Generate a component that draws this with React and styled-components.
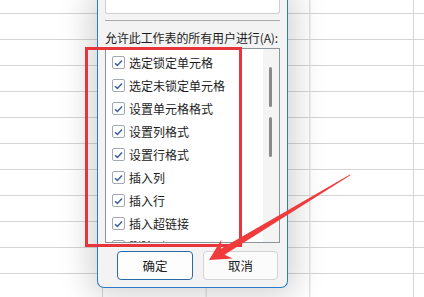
import React from 'react';
import styled, { createGlobalStyle, css } from 'styled-components';

const GlobalStyle = createGlobalStyle`
  html, body {
    margin: 0;
    padding: 0;
    background: #fff;
  }
  body {
    font-family: "Noto Sans CJK SC", "Noto Sans", sans-serif;
    color: #1b1b1b;
  }
`;

const Stage = styled.div`
  position: relative;
  width: 424px;
  height: 297px;
  overflow: hidden;
  box-sizing: border-box;
  padding-left: 97px;
  display: flex;
  align-items: flex-start;
  background-color: #fff;
  background-image:
    linear-gradient(#d5d5d5 1px, transparent 1px),
    linear-gradient(90deg, #d5d5d5 1px, transparent 1px);
  background-size: 100% 26px, 103.67px 100%;
  background-position: 0 13px, 102px 0;
`;

const Dialog = styled.div`
  box-sizing: border-box;
  width: 191px;
  height: 288px;
  padding: 0 7px;
  display: flex;
  flex-direction: column;
  background: #f3f3f3;
  border: 1px solid #2a7ccb;
  border-top: none;
  border-radius: 0 0 7px 7px;
  box-shadow: 0 0 30px 8px rgba(0, 0, 0, 0.17);
`;

const TopField = styled.div`
  height: 14px;
  box-sizing: border-box;
  background: #fff;
  border: 1px solid #cfcfcf;
  border-top: none;
  border-radius: 0 0 3px 3px;
`;

const Divider = styled.div`
  height: 1px;
  margin-top: 6px;
  background: #a9a9a9;
`;

const Label = styled.div`
  margin-top: 9px;
  margin-bottom: 2px;
  font-size: 12px;
  line-height: 16px;
  white-space: nowrap;
  letter-spacing: -0.1px;
`;

const ListBox = styled.div`
  box-sizing: border-box;
  height: 195px;
  display: flex;
  background: #fff;
  border: 1px solid #8e949c;
  overflow: hidden;
`;

const Items = styled.div`
  flex: 1;
  padding: 2px 0 0 6px;
`;

const Item = styled.div`
  height: 23px;
  display: flex;
  align-items: center;
  gap: 4px;
  font-size: 12px;
  white-space: nowrap;
`;

const Box = styled.span`
  box-sizing: border-box;
  width: 13px;
  height: 13px;
  flex: none;
  display: flex;
  align-items: center;
  justify-content: center;
  background: #fff;
  border: 1px solid #a2a9b4;
  border-radius: 2px;
`;

const ScrollTrack = styled.div`
  width: 16px;
  box-sizing: border-box;
  padding: 18px 0 0 6px;
  display: flex;
  flex-direction: column;
  gap: 10px;
  background: #f4f4f4;
`;

const Thumb = styled.div`
  width: 3px;
  height: 40px;
  border-radius: 2px;
  background: #8a8a8a;
`;

const Buttons = styled.div`
  margin-top: 8px;
  padding-right: 2px;
  display: flex;
  justify-content: flex-end;
  gap: 10px;
`;

const Button = styled.button`
  box-sizing: border-box;
  width: ${p => p.w}px;
  height: 29px;
  padding: 0;
  font-family: inherit;
  font-size: 12.5px;
  color: #1b1b1b;
  background: #fbfbfb;
  border: 1px solid #d3d3d3;
  border-radius: 4px;
  ${p => p.primary && css`
    background: #fdfdfd;
    border-color: #2b6aa6;
  `}
`;

const Highlight = styled.div`
  position: absolute;
  left: 85px;
  top: 47px;
  width: 157px;
  height: 200px;
  box-sizing: border-box;
  border: 3px solid #e8353b;
  pointer-events: none;
`;

const ArrowLayer = styled.svg`
  position: absolute;
  left: 0;
  top: 0;
  pointer-events: none;
`;

const items = [
  ['选定锁定单元格', true],
  ['选定未锁定单元格', true],
  ['设置单元格格式', true],
  ['设置列格式', true],
  ['设置行格式', true],
  ['插入列', true],
  ['插入行', true],
  ['插入超链接', true],
  ['删除列', false],
];

const Check = ({ on }) => (
  <Box>
    {on && (
      <svg width="9" height="8" viewBox="0 0 9 8">
        <polyline points="1,4.2 3.4,6.4 8,1.6" fill="none" stroke="#3c5f9e" strokeWidth="1.5" />
      </svg>
    )}
  </Box>
);

export default function App() {
  return (
    <>
      <GlobalStyle />
      <Stage>
        <Dialog>
          <TopField />
          <Divider />
          <Label>允许此工作表的所有用户进行(A):</Label>
          <ListBox>
            <Items>
              {items.map(([text, on]) => (
                <Item key={text}>
                  <Check on={on} />
                  {text}
                </Item>
              ))}
            </Items>
            <ScrollTrack>
              <Thumb />
              <Thumb />
            </ScrollTrack>
          </ListBox>
          <Buttons>
            <Button primary w={76}>确定</Button>
            <Button w={75}>取消</Button>
          </Buttons>
        </Dialog>
        <Highlight />
        <ArrowLayer width="424" height="297" viewBox="0 0 424 297">
          <polygon
            fill="#ef3b3b"
            points="209,260 221.3,239.8 220.9,248.7 350,174.4 350.4,175.3 224.5,254.7 232.7,258.6"
          />
        </ArrowLayer>
      </Stage>
    </>
  );
}
